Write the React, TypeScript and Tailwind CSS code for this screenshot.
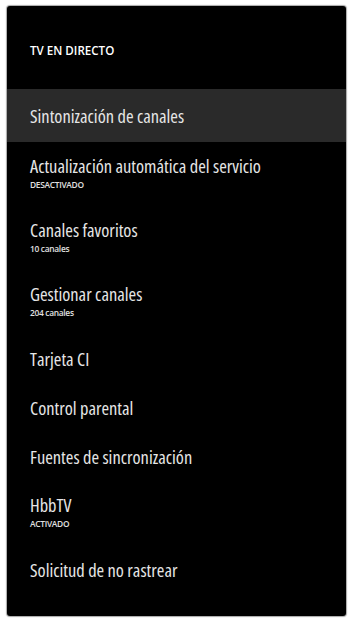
import React from 'react';

interface MenuItem {
  title: string;
  subtitle?: string;
  active?: boolean;
}

const items: MenuItem[] = [
  { title: 'Sintonización de canales', active: true },
  { title: 'Actualización automática del servicio', subtitle: 'DESACTIVADO' },
  { title: 'Canales favoritos', subtitle: '10 canales' },
  { title: 'Gestionar canales', subtitle: '204 canales' },
  { title: 'Tarjeta CI' },
  { title: 'Control parental' },
  { title: 'Fuentes de sincronización' },
  { title: 'HbbTV', subtitle: 'ACTIVADO' },
  { title: 'Solicitud de no rastrear' },
];

export default function App() {
  return (
    <div className="h-[618px] w-[348px] bg-white pt-[6px] pl-[7px] pr-[2px] pb-[2px] font-['Open_Sans',sans-serif]">
      <div className="flex h-full flex-col rounded-[3px] bg-black shadow-[0_0_1px_1px_rgba(0,0,0,0.35)]">
        {/* Header */}
        <div className="h-[83px] px-[23px] pt-[37px]">
          <p className="text-[11.6px] leading-[15px] font-semibold text-white">TV EN DIRECTO</p>
        </div>

        {/* Menu */}
        {items.map((item) => {
          if (item.active) {
            return (
              <div key={item.title} className="flex h-[53px] items-center bg-[#2a2a2a] px-[23px]">
                <span className="text-[18.4px] leading-[22px] font-stretch-condensed text-[#e6e6e6]">{item.title}</span>
              </div>
            );
          }
          if (item.subtitle) {
            return (
              <div key={item.title} className="h-[64px] px-[23px] pt-[13px]">
                <p className="text-[18.4px] leading-[22px] font-stretch-condensed text-[#e6e6e6]">{item.title}</p>
                <p className="mt-[2px] text-[8.4px] leading-[11px] font-semibold tracking-[-0.3px] text-[#e0e0e0]">
                  {item.subtitle}
                </p>
              </div>
            );
          }
          return (
            <div key={item.title} className="flex h-[49px] items-center px-[23px]">
              <span className="text-[18.4px] leading-[22px] font-stretch-condensed text-[#e6e6e6]">{item.title}</span>
            </div>
          );
        })}
      </div>
    </div>
  );
}
